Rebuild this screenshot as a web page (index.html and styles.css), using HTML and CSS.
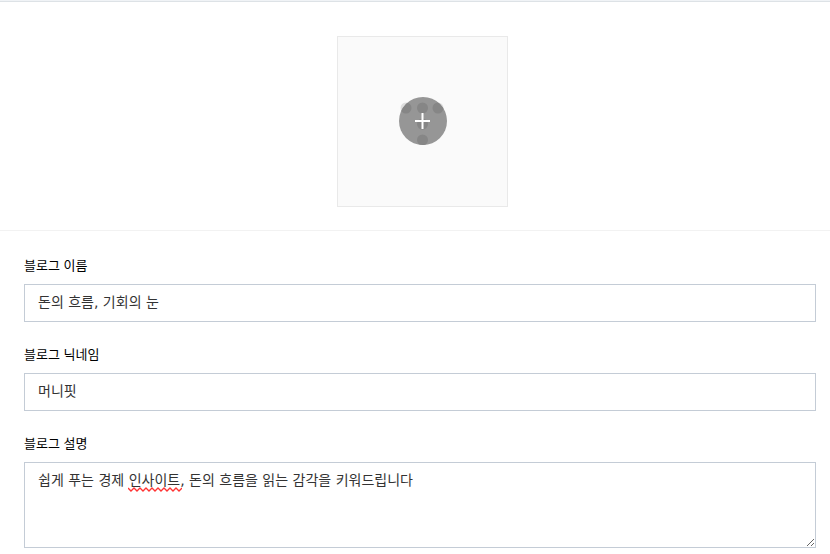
FILE: index.html
```html
<!DOCTYPE html>
<html lang="ko">
<head>
    <meta charset="UTF-8">
    <meta name="viewport" content="width=device-width, initial-scale=1.0">
    <title>블로그 설정</title>
    <link rel="stylesheet" href="styles.css">
</head>
<body>
    <div class="top-line"></div>
    <form class="setting">
        <div class="profile">
            <button type="button" class="upload" aria-label="이미지 추가">
                <svg class="upload-icon" width="48" height="48" viewBox="0 0 48 48">
                    <g fill="#dedede">
                        <circle cx="7" cy="11" r="5.5"/>
                        <circle cx="39" cy="11" r="5.5"/>
                    </g>
                    <circle cx="24" cy="24" r="24" fill="#969696"/>
                    <clipPath id="disc"><circle cx="24" cy="24" r="24"/></clipPath>
                    <g fill="#868686" clip-path="url(#disc)">
                        <circle cx="7" cy="11" r="5.5"/>
                        <circle cx="23.5" cy="11" r="5.5"/>
                        <circle cx="39" cy="11" r="5.5"/>
                        <circle cx="23.5" cy="27" r="5.5"/>
                        <circle cx="23.5" cy="43" r="5.5"/>
                    </g>
                    <path d="M16 24h15M23.5 16v16" stroke="#fff" stroke-width="2" fill="none"/>
                </svg>
            </button>
        </div>
        <div class="fields">
            <div class="field">
                <label for="blogName">블로그 이름</label>
                <input type="text" id="blogName" value="돈의 흐름, 기회의 눈">
            </div>
            <div class="field">
                <label for="nickname">블로그 닉네임</label>
                <input type="text" id="nickname" value="머니핏">
            </div>
            <div class="field">
                <label for="description">블로그 설명</label>
                <div class="text-wrap">
                    <textarea id="description" spellcheck="false">쉽게 푸는 경제 인사이트, 돈의 흐름을 읽는 감각을 키워드립니다</textarea>
                    <svg class="spell-mark" width="54" height="5" viewBox="0 0 54 5">
                        <path d="M0 1l3 3 3-3 3 3 3-3 3 3 3-3 3 3 3-3 3 3 3-3 3 3 3-3 3 3 3-3 3 3 3-3 3 3 3-3" stroke="#f33" stroke-width="1.3" fill="none"/>
                    </svg>
                </div>
            </div>
        </div>
    </form>
</body>
</html>
```
FILE: styles.css
```css
* {
    box-sizing: border-box;
}
body {
    margin: 0;
    background: #fff;
    font-family: "Noto Sans CJK KR", sans-serif;
    color: #000;
}
.top-line {
    height: 2px;
    background: #f0f3f6;
    border-bottom: 1px solid #dde2e6;
}
.profile {
    display: flex;
    justify-content: center;
    padding: 34px 0 23px 15px;
    border-bottom: 1px solid #f2f2f2;
}
.upload {
    display: flex;
    align-items: center;
    justify-content: center;
    width: 171px;
    height: 171px;
    padding: 0 0 1px;
    border: 1px solid #e9e9e9;
    background: #fafafa;
    cursor: pointer;
}
.fields {
    display: flex;
    flex-direction: column;
    gap: 22px;
    padding: 24px 14px 6px 24px;
}
.field label {
    display: block;
    margin-bottom: 9px;
    font-size: 13px;
    line-height: 20px;
}
.field input,
.field textarea {
    display: block;
    width: 100%;
    padding: 7px 13px;
    border: 1px solid #c4ccd6;
    border-radius: 0;
    background: #fff;
    font-family: "DejaVu Sans", "Noto Sans CJK KR", sans-serif;
    font-size: 14px;
    line-height: 20px;
    color: #333;
    outline: none;
}
.field input {
    height: 38px;
    padding-top: 5px;
    padding-bottom: 9px;
}
.field textarea {
    height: 86px;
    resize: vertical;
}
.text-wrap {
    position: relative;
}
.spell-mark {
    position: absolute;
    left: 104px;
    top: 25px;
    pointer-events: none;
}
```
